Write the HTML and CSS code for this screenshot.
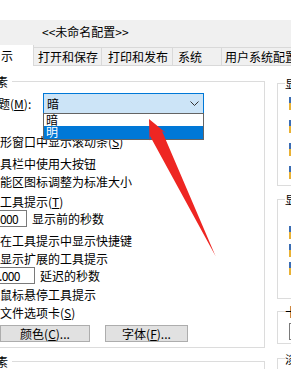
FILE: index.html
```html
<!DOCTYPE html>
<html lang="zh-CN">
<head>
    <meta charset="UTF-8">
    <meta name="viewport" content="width=device-width, initial-scale=1.0">
    <title>选项 - 显示</title>
    <link rel="stylesheet" href="styles.css">
</head>
<body>
<div class="window">
    <div class="top-strip"></div>
    <div class="profile">&lt;&lt;未命名配置&gt;&gt;</div>

    <div class="tabs">
        <div class="tab active">示</div>
        <div class="tab t1">打开和保存</div>
        <div class="tab t2">打印和发布</div>
        <div class="tab t3">系统</div>
        <div class="tab t4">用户系统配置</div>
    </div>

    <div class="panel">
        <div class="col-left">
            <fieldset class="group main">
                <legend>素</legend>

                <div class="row combo-row">
                    <span class="label"><span class="cut">题</span>(<u>M</u>):</span>
                    <div class="combo">
                        <span class="combo-value">暗</span>
                        <svg class="chevron" width="9" height="6" viewBox="0 0 9 6">
                            <polyline points="0.5,0.5 4.5,4.5 8.5,0.5" fill="none" stroke="#333" stroke-width="1"/>
                        </svg>
                        <ul class="dropdown">
                            <li>暗</li>
                            <li class="selected">明</li>
                        </ul>
                    </div>
                </div>

                <div class="row r1">形窗口中显示滚动条(<u>S</u>)</div>
                <div class="row r2">具栏中使用大按钮</div>
                <div class="row r3">能区图标调整为标准大小</div>
                <div class="row r4">工具提示(<u>T</u>)</div>
                <div class="row r5">
                    <span class="num n1">000</span>
                    <span>显示前的秒数</span>
                </div>
                <div class="row r6">在工具提示中显示快捷键</div>
                <div class="row r7">显示扩展的工具提示</div>
                <div class="row r8">
                    <span class="num n2">.000</span>
                    <span>延迟的秒数</span>
                </div>
                <div class="row r9">鼠标悬停工具提示</div>
                <div class="row r10">文件选项卡(<u>S</u>)</div>
                <div class="row buttons">
                    <button class="btn b-color">颜色(<u>C</u>)...</button>
                    <button class="btn b-font">字体(<u>F</u>)...</button>
                </div>
            </fieldset>

            <fieldset class="group layout">
                <legend>素</legend>
            </fieldset>
        </div>

        <div class="col-right">
            <fieldset class="rbox res">
                <legend>显</legend>
                <div class="icons">
                    <span class="ico"></span>
                    <span class="ico"></span>
                    <span class="ico"></span>
                    <span class="ico"></span>
                </div>
            </fieldset>
            <fieldset class="rbox perf">
                <legend>显</legend>
                <div class="icons tight">
                    <span class="ico"></span>
                    <span class="ico"></span>
                    <span class="ico"></span>
                </div>
            </fieldset>
            <fieldset class="rbox cross">
                <legend>十</legend>
                <span class="cross-input"></span>
            </fieldset>
            <fieldset class="rbox fade">
                <legend>淡</legend>
            </fieldset>
        </div>
    </div>

    <!-- annotation arrow drawn on top of the screenshot -->
    <svg class="arrow" width="291" height="369" viewBox="0 0 291 369">
        <polygon points="149,119 166,133 162,131 215.5,256 150,136 149.5,141" fill="#ee2622"/>
    </svg>
</div>
</body>
</html>
```

FILE: styles.css
```css
* {
    box-sizing: border-box;
}

body {
    margin: 0;
    font-family: "Noto Sans CJK SC", "Noto Sans", sans-serif;
    font-size: 12px;
    color: #000;
    background: #fff;
}

.window {
    position: relative;
    width: 291px;
    height: 369px;
    overflow: hidden;
    background: #fff;
}

.top-strip {
    height: 20px;
}

.profile {
    height: 25px;
    line-height: 24px;
    padding-left: 42px;
    background: #f0f0f0;
    white-space: nowrap;
}

/* tab strip */
.tabs {
    display: flex;
    height: 21px;
    background: #f0f0f0;
    border-bottom: 1px solid #d9d9d9;
}

.tab {
    flex: none;
    height: 18px;
    margin-top: 2px;
    line-height: 17px;
    border-top: 1px solid #d9d9d9;
    border-right: 1px solid #d9d9d9;
    background: #f0f0f0;
    white-space: nowrap;
}

.tab.active {
    width: 34px;
    height: 21px;
    margin-top: 0;
    padding-left: 1px;
    line-height: 22px;
    border-top: none;
    background: #fff;
}

.t1 { width: 68px; padding-left: 4px; }
.t2 { width: 71px; padding-left: 6px; }
.t3 { width: 49px; padding-left: 5px; }
.t4 { width: 80px; padding-left: 3px; }

/* main area */
.panel {
    display: flex;
}

.col-left {
    flex: none;
    width: 265px;
}

.group {
    min-width: 0;
    margin: 0;
    border: 1px solid #dcdcdc;
}

.group legend {
    margin-left: -4px;
    padding: 0 4px 0 0;
    line-height: 13px;
}

.main {
    width: 325px;
    margin: 9px 0 0 -60px;
    padding: 5px 0 5px 59px;
}

.layout {
    width: 325px;
    height: 60px;
    margin: 7px 0 0 -60px;
    padding: 0 0 0 59px;
}

.row {
    display: flex;
    align-items: center;
    height: 18px;
    white-space: nowrap;
}

.combo-row {
    height: 21px;
}

.label {
    flex: none;
    width: 43px;
}

.cut {
    margin-left: -2px;
}

.combo {
    position: relative;
    display: flex;
    align-items: center;
    width: 161px;
    height: 21px;
    padding-left: 3px;
    border: 1px solid #0078d7;
    background: #cce4f7;
}

.combo-value {
    flex: 1;
}

.chevron {
    margin-right: 4px;
}

.dropdown {
    position: absolute;
    top: 19px;
    left: -1px;
    width: 161px;
    margin: 0;
    padding: 0;
    list-style: none;
    border: 1px solid #646464;
    background: #fff;
    z-index: 2;
}

.dropdown li {
    height: 12px;
    line-height: 12px;
    padding-left: 2px;
}

.dropdown li.selected {
    height: 13px;
    background: #0078d7;
    color: #fff;
}

.r1 { margin-top: 18px; }
.r2 { margin-top: 4px; }
.r4 { margin-top: 2px; }
.r6 { margin-top: 4px; }
.r9 { margin-top: 2px; height: 17px; }

.r5,
.r8 {
    height: 17px;
}

.num {
    flex: none;
    height: 17px;
    margin-left: -13px;
    margin-right: 5px;
    padding-left: 12px;
    line-height: 15px;
    border: 1px solid #7a7a7a;
    letter-spacing: -0.6px;
}

.n1 { width: 40px; }
.n2 { width: 48px; padding-left: 11px; }

.buttons {
    margin-top: 4px;
    height: 17px;
}

.btn {
    height: 17px;
    padding: 0;
    border: 1px solid #adadad;
    background: #e1e1e1;
    font: inherit;
    line-height: 15px;
    color: #000;
}

.b-color { width: 90px; }
.b-font { width: 83px; margin-left: 15px; }

/* right column */
.col-right {
    flex: none;
    width: 140px;
    padding-left: 12px;
}

.rbox {
    min-width: 0;
    margin: 0;
    padding: 0 0 0 11px;
    border: 1px solid #dcdcdc;
}

.rbox legend {
    margin-left: -4px;
    padding: 0;
    line-height: 13px;
}

.res {
    height: 109px;
    margin-top: 11px;
}

.perf {
    height: 106px;
    margin-top: 7px;
}

.cross {
    height: 39px;
    margin-top: 6px;
}

.fade {
    height: 40px;
    margin-top: 8px;
}

.icons {
    display: flex;
    flex-direction: column;
    gap: 10px;
    padding-top: 7px;
}

.icons.tight {
    gap: 5px;
    padding-top: 20px;
}

.ico {
    display: block;
    width: 3px;
    height: 13px;
    background: linear-gradient(#3b6db3 0 46%, #e9b133 46% 100%);
}

.cross-input {
    display: block;
    width: 40px;
    height: 17px;
    margin-top: 5px;
    border: 1px solid #7a7a7a;
}

.arrow {
    position: absolute;
    top: 0;
    left: 0;
    pointer-events: none;
    z-index: 5;
}
```
